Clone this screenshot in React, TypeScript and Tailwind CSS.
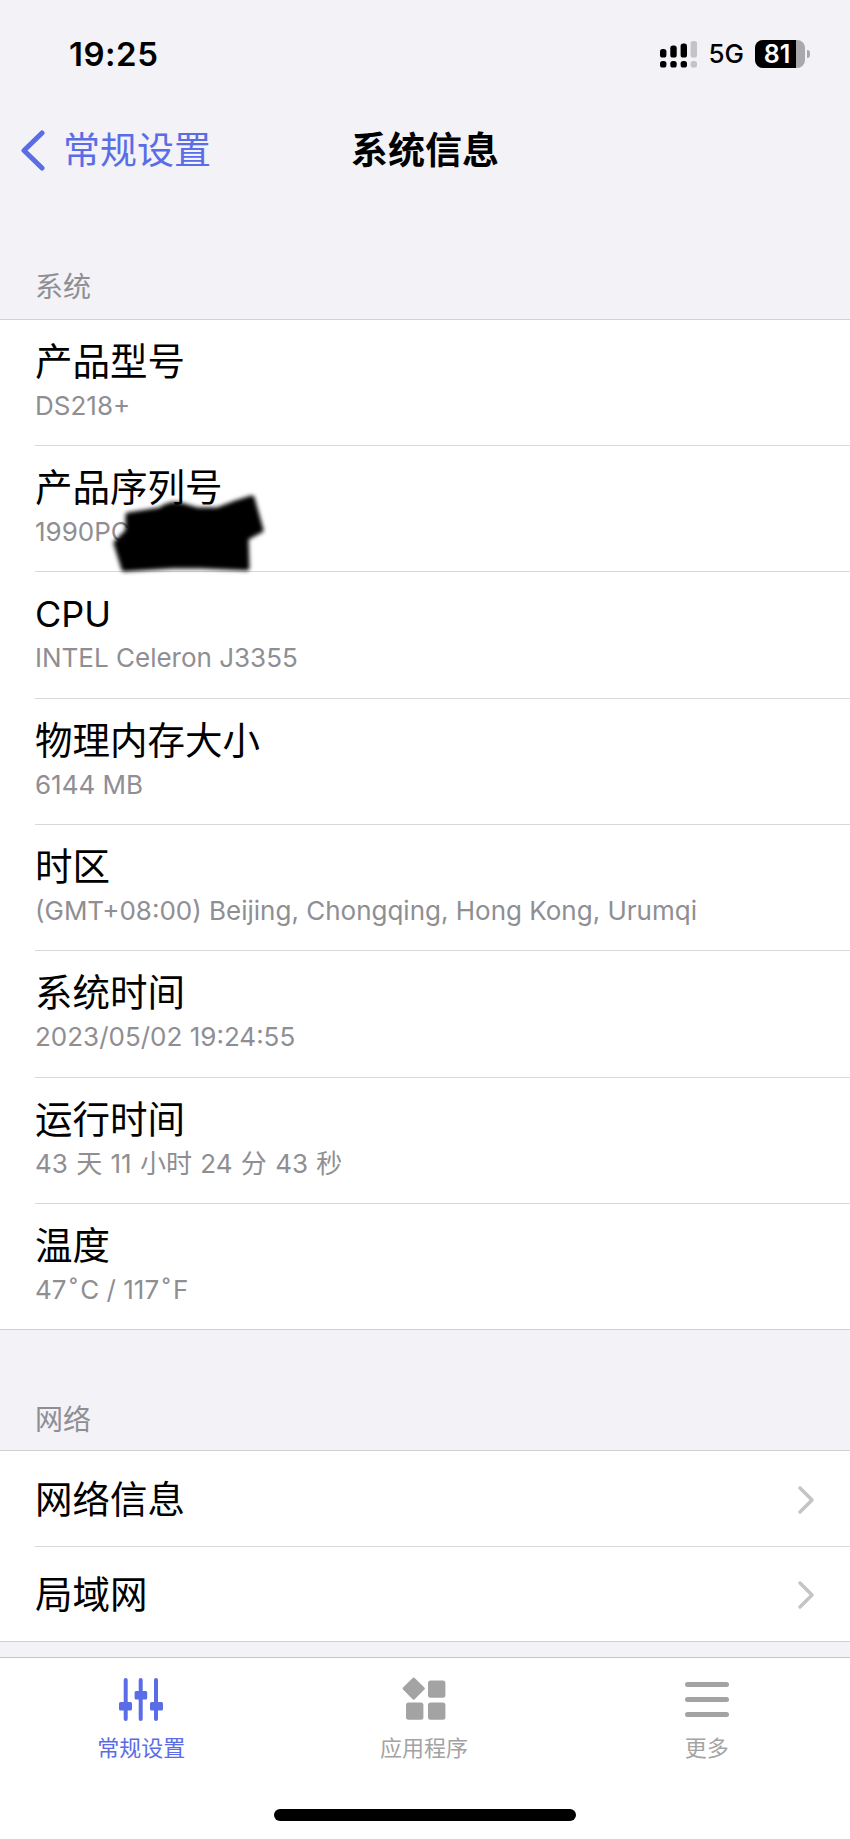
import React from 'react';

const Deg = () => <span className="px-[3px]">˚</span>;

const sysRows: { title: string; sub: React.ReactNode }[] = [
  { title: '产品型号', sub: 'DS218+' },
  { title: '产品序列号', sub: '1990PC' },
  { title: 'CPU', sub: 'INTEL Celeron J3355' },
  { title: '物理内存大小', sub: '6144 MB' },
  { title: '时区', sub: '(GMT+08:00) Beijing, Chongqing, Hong Kong, Urumqi' },
  { title: '系统时间', sub: '2023/05/02 19:24:55' },
  { title: '运行时间', sub: <span className="[word-spacing:1px]">43 天 11 小时 24 分 43 秒</span> },
  { title: '温度', sub: <>47<Deg />C / 117<Deg />F</> },
];

const SignalIcon = () => (
  <svg width="37" height="27" viewBox="0 0 37 27" className="block">
    <g fill="#000">
      <rect x="0" y="8" width="6.4" height="8.6" rx="2.6" />
      <rect x="10.3" y="4.6" width="6.4" height="12" rx="2.6" />
      <rect x="20.6" y="2.6" width="6.4" height="14" rx="2.6" />
      <rect x="0" y="20" width="6.4" height="6.6" rx="2.6" />
      <rect x="10.3" y="20" width="6.4" height="6.6" rx="2.6" />
      <rect x="20.6" y="20" width="6.4" height="6.6" rx="2.6" />
    </g>
    <g fill="#c4c4c6">
      <rect x="30.6" y="0" width="6.4" height="16.6" rx="2.6" />
      <rect x="30.6" y="20" width="6.4" height="6.6" rx="2.6" />
    </g>
  </svg>
);

const Battery = () => (
  <div className="flex items-center gap-[2px]">
    <div className="flex h-[28px] w-[50px] rounded-[8px] bg-[#a9a9ac]">
      <div className="flex h-full w-[41px] items-center justify-center rounded-l-[8px] bg-black pl-[3px] text-[25px] font-semibold leading-[28px] text-white">81</div>
    </div>
    <div className="h-[8px] w-[3px] rounded-r-full bg-[#a9a9ac]" />
  </div>
);

const Chevron = () => (
  <svg width="16" height="28" viewBox="0 0 16 28" fill="none" className="block">
    <path d="M2 2 L14 14 L2 26" stroke="#c4c4c7" strokeWidth="3.4" strokeLinecap="round" strokeLinejoin="round" />
  </svg>
);

const SettingsIcon = () => (
  <svg width="44" height="43" viewBox="0 0 44 43" className="block">
    <g fill="#5a6de6">
      <rect x="4.7" y="0" width="4" height="43" rx="2" />
      <rect x="19.7" y="0" width="4" height="43" rx="2" />
      <rect x="35" y="0" width="4" height="43" rx="2" />
      <rect x="0" y="24" width="13" height="8.6" rx="1.5" />
      <rect x="15.6" y="13" width="12.6" height="8.6" rx="1.5" />
      <rect x="31" y="24" width="13" height="8.6" rx="1.5" />
    </g>
  </svg>
);

const AppsIcon = () => (
  <svg width="44" height="44" viewBox="0 0 44 44" className="block">
    <g fill="#a3a3a3">
      <path d="M10.7 1 Q11.7 0 12.7 1 L22.4 10.6 Q23.4 11.6 22.4 12.6 L12.7 22.2 Q11.7 23.2 10.7 22.2 L1 12.6 Q0 11.6 1 10.6 Z" />
      <rect x="26" y="3.4" width="17.4" height="17.4" rx="2.5" />
      <rect x="4" y="25.4" width="17.4" height="17.4" rx="2.5" />
      <rect x="26" y="25.4" width="17.4" height="17.4" rx="2.5" />
    </g>
  </svg>
);

const MenuIcon = () => (
  <div className="flex w-[44px] flex-col gap-[10px] py-[4px]">
    <div className="h-[5px] rounded-full bg-[#a3a3a3]" />
    <div className="h-[5px] rounded-full bg-[#a3a3a3]" />
    <div className="h-[5px] rounded-full bg-[#a3a3a3]" />
  </div>
);

const SectionHeader = ({ label, height, pad }: { label: string; height: string; pad: string }) => (
  <div className={`flex items-end pl-[35px] text-[28px] leading-[40px] text-[#8e8e93] ${height} ${pad}`}>
    {label}
  </div>
);

const TabItem = ({ icon, label, active }: { icon: React.ReactNode; label: string; active?: boolean }) => (
  <div className="flex flex-col items-center">
    <div className="flex h-[44px] items-center">{icon}</div>
    <div className={`mt-[12px] text-[22px] leading-[30px] ${active ? 'text-[#5a6de6]' : 'text-[#a3a3a3]'}`}>{label}</div>
  </div>
);

export default function App() {
  return (
    <div className="relative flex h-[1839px] w-[850px] flex-col overflow-hidden bg-[#f2f2f7] font-[Inter,'Noto_Sans_CJK_SC',sans-serif] text-black">
      {/* status bar */}
      <div className="flex h-[108px] items-center justify-between pl-[69px] pr-[40px]">
        <div className="text-[33px] font-semibold leading-none tracking-[0.5px]">19:25</div>
        <div className="flex items-center">
          <SignalIcon />
          <div className="ml-[11px] text-[26px] font-medium leading-none">5G</div>
          <div className="ml-[11px]"><Battery /></div>
        </div>
      </div>

      {/* nav */}
      <div className="relative flex h-[84px] items-center justify-center">
        <div className="absolute left-[20px] top-[22px] flex items-center gap-[18px]">
          <svg width="25" height="41" viewBox="0 0 25 41" fill="none" className="block">
            <path d="M22 3 L4 20.5 L22 38" stroke="#5a6de6" strokeWidth="5" strokeLinecap="round" strokeLinejoin="round" />
          </svg>
          <div className="text-[37px] leading-none text-[#5a6de6]">常规设置</div>
        </div>
        <div className="text-[37px] font-bold leading-none">系统信息</div>
      </div>

      <SectionHeader label="系统" height="h-[127px]" pad="pb-[12px]" />
      <div className="border-y border-[#d1d1d4] bg-white">
        {sysRows.map((r, i) => (
          <div key={r.title} className={`pl-[35px] ${i === 0 ? 'h-[125px]' : 'h-[126.35px]'}`}>
            <div className={`h-full pt-[20px] ${i > 0 ? 'border-t border-[#d8d8da]' : ''}`}>
              <div className={`leading-[44px] ${r.title === 'CPU' ? 'text-[36px]' : 'text-[37.5px]'}`}>{r.title}</div>
              <div className="text-[26px] leading-[44px] text-[#8e8e93]">{r.sub}</div>
            </div>
          </div>
        ))}
      </div>

      <SectionHeader label="网络" height="h-[120px]" pad="pb-[10px]" />
      <div className="border-y border-[#d1d1d4] bg-white">
        {['网络信息', '局域网'].map((t, i) => (
          <div key={t} className="h-[95px] pl-[35px]">
            <div className={`flex h-full items-center justify-between pr-[36px] pt-[2px] ${i > 0 ? 'border-t border-[#d8d8da]' : ''}`}>
              <div className="text-[37.5px] leading-[44px]">{t}</div>
              <Chevron />
            </div>
          </div>
        ))}
      </div>

      {/* tab bar */}
      <div className="mt-auto h-[182px] border-t border-[#c6c6cc] bg-white">
        <div className="grid grid-cols-3 pr-[2px] pt-[19px]">
          <TabItem icon={<SettingsIcon />} label="常规设置" active />
          <TabItem icon={<AppsIcon />} label="应用程序" />
          <TabItem icon={<MenuIcon />} label="更多" />
        </div>
        <div className="mx-auto mt-[46px] h-[12px] w-[302px] rounded-full bg-black" />
      </div>

      {/* scribbled-out serial number */}
      <svg width="200" height="100" viewBox="0 0 200 100" className="absolute left-[100px] top-[485px]">
        <filter id="blur"><feGaussianBlur stdDeviation="2" /></filter>
        <path
          filter="url(#blur)"
          stroke="#000"
          strokeWidth="5"
          strokeLinejoin="round"
          d="M28 30 L60 25 Q70 18 80 20 L97 25 L117 25 L133 19 L152 13 L161 45 L146 53 L147 83 L100 81 L73 81 L24 84 L16 58 L28 46 Z"
        />
      </svg>
    </div>
  );
}
